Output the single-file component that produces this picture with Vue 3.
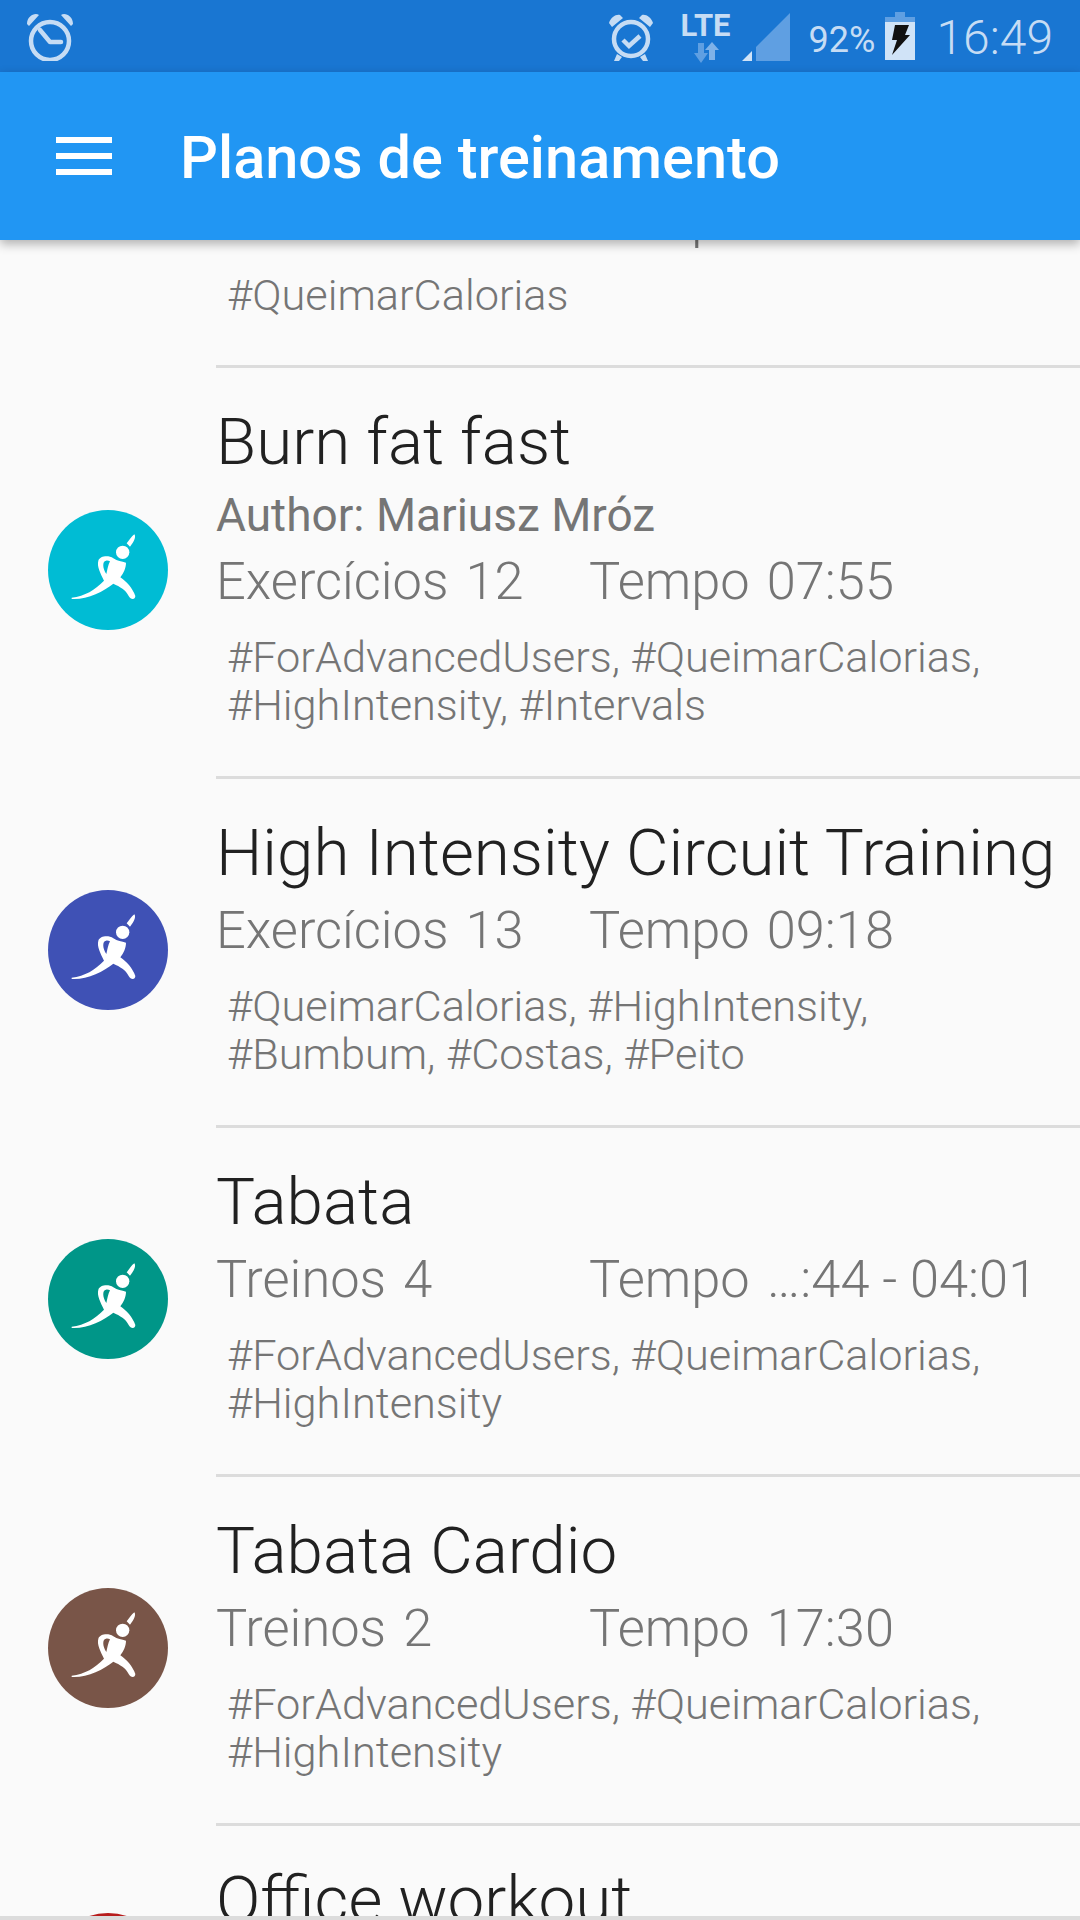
<template>
  <div class="screen">
    <div class="status-bar">
      <svg class="st-alarm-left" width="48" height="48" viewBox="0 0 48 48">
        <circle cx="24" cy="28" r="19" fill="none" stroke="#c6dcf4" stroke-width="4.5" />
        <path d="M14 17 L24 29 L35 29" fill="none" stroke="#c6dcf4" stroke-width="4.5" stroke-linecap="round" stroke-linejoin="round" />
        <path d="M1 11 C1 3 9 -1 13 2 L3 13 Z M47 11 C47 3 39 -1 35 2 L45 13 Z" fill="#c6dcf4" />
      </svg>
      <div class="status-right">
        <svg class="st-alarm" width="44" height="48" viewBox="0 0 44 48">
          <circle cx="22" cy="25" r="17" fill="none" stroke="#c6dcf4" stroke-width="4.5" />
          <path d="M14 26 L20 32 L31 22" fill="none" stroke="#c6dcf4" stroke-width="4.5" />
          <path d="M0 9 C2 3 7 0 11 1 L14 4 L3 13 Z M44 9 C42 3 37 0 33 1 L30 4 L41 13 Z" fill="#c6dcf4" />
          <path d="M8 40 L5 47 L10 47 L13 43 Z M36 40 L39 47 L34 47 L31 43 Z" fill="#c6dcf4" />
        </svg>
        <div class="st-network">
          <span class="st-lte">LTE</span>
          <svg width="28" height="21" viewBox="0 0 28 21">
            <path d="M6 1 H12 V11 H16 L9 21 L2 11 H6 Z" fill="#5f9fe2" />
            <path d="M17 18 H23 V8 H27 L20 0 L13 8 H17 Z" fill="#7fb2e8" />
          </svg>
        </div>
        <svg class="st-signal" width="48" height="48" viewBox="0 0 48 48">
          <path d="M14 48 V34 L48 0 V48 Z" fill="#5f9fe2" />
          <path d="M0 48 L10 38 V48 Z" fill="#d0e3f7" />
        </svg>
        <span class="st-percent">92%</span>
        <svg class="st-battery" width="30" height="48" viewBox="0 0 30 48">
          <path d="M10 0 H20 V5 H30 V10 H0 V5 H10 Z" fill="#5f9fe2" />
          <rect x="0" y="10" width="30" height="38" fill="#d0e3f7" />
          <path d="M10 13 H24 L20 23 H25 L7 43 L12 28 H7 Z" fill="#111" />
        </svg>
        <span class="st-time">16:49</span>
      </div>
    </div>

    <header class="app-bar">
      <div class="menu-icon">
        <span></span>
        <span></span>
        <span></span>
      </div>
      <h1>Planos de treinamento</h1>
    </header>

    <div class="list">
      <div class="cut-item">
        <div class="meta">
          <div class="meta-col"><span>Exercícios</span></div>
          <div class="meta-col"><span>Tempo</span></div>
        </div>
        <div class="tags">#QueimarCalorias</div>
      </div>

      <div v-for="plan in plans" :key="plan.title" class="item">
        <div class="avatar" :style="{ background: plan.color }">
          <svg width="120" height="120" viewBox="54 60 360 360">
            <circle cx="278" cy="187" r="20" fill="#fff" />
            <path d="M313 133 C319 140 312 156 300 170 L290 160 C298 150 305 138 313 133 Z" fill="#fff" />
            <path fill="#fff" fill-rule="evenodd" d="M125 323 C165 318 195 300 222 272 C212 250 200 230 205 212 C210 198 235 195 250 205 C262 213 275 215 288 218 C288 235 280 250 271 262 C290 275 308 295 316 318 C316 330 302 330 296 318 C288 300 270 290 250 281 C220 305 170 330 125 327 Z M228 212 C216 214 218 236 229 252 C232 240 234 225 240 214 C236 212 232 211 228 212 Z" />
          </svg>
        </div>
        <div class="body">
          <div class="title">{{ plan.title }}</div>
          <div v-if="plan.author" class="author">Author: {{ plan.author }}</div>
          <div class="meta">
            <div class="meta-col"><span>{{ plan.countLabel }}</span><span>{{ plan.count }}</span></div>
            <div class="meta-col"><span>Tempo</span><span>{{ plan.time }}</span></div>
          </div>
          <div class="tags">{{ plan.tags }}</div>
        </div>
      </div>
    </div>
    <div class="bottom-line"></div>
  </div>
</template>

<script setup>
const plans = [
  {
    title: 'Burn fat fast',
    author: 'Mariusz Mróz',
    countLabel: 'Exercícios',
    count: 12,
    time: '07:55',
    tags: '#ForAdvancedUsers, #QueimarCalorias, #HighIntensity, #Intervals',
    color: '#00BCD4'
  },
  {
    title: 'High Intensity Circuit Training',
    countLabel: 'Exercícios',
    count: 13,
    time: '09:18',
    tags: '#QueimarCalorias, #HighIntensity, #Bumbum, #Costas, #Peito',
    color: '#3F51B5'
  },
  {
    title: 'Tabata',
    countLabel: 'Treinos',
    count: 4,
    time: '…:44 - 04:01',
    tags: '#ForAdvancedUsers, #QueimarCalorias, #HighIntensity',
    color: '#009688'
  },
  {
    title: 'Tabata Cardio',
    countLabel: 'Treinos',
    count: 2,
    time: '17:30',
    tags: '#ForAdvancedUsers, #QueimarCalorias, #HighIntensity',
    color: '#795548'
  },
  {
    title: 'Office workout',
    countLabel: 'Exercícios',
    count: 8,
    time: '04:00',
    tags: '#Costas',
    color: '#B71C1C'
  }
]
</script>

<style>
html,
body {
  margin: 0;
  background: #fafafa;
}
</style>

<style scoped>
.screen {
  width: 1080px;
  height: 1920px;
  display: flex;
  flex-direction: column;
  overflow: hidden;
  background: #fafafa;
  font-family: Roboto, "Liberation Sans", sans-serif;
}

.status-bar {
  height: 72px;
  flex-shrink: 0;
  display: flex;
  justify-content: space-between;
  align-items: flex-start;
  background: #1976d2;
  color: #c6dcf4;
}

.st-alarm-left {
  margin: 13px 0 0 26px;
}

.status-right {
  display: flex;
  align-items: flex-start;
  margin-right: 27px;
}

.st-alarm {
  margin-top: 14px;
}

.st-network {
  width: 52px;
  margin: 14px 0 0 27px;
  display: flex;
  flex-direction: column;
  align-items: center;
}

.st-lte {
  font-size: 31px;
  font-weight: 700;
  line-height: 24px;
  height: 28px;
}

.st-signal {
  margin: 13px 0 0 10px;
}

.st-percent {
  margin: 18px 0 0 19px;
  font-size: 36px;
  line-height: 44px;
}

.st-battery {
  margin: 12px 0 0 10px;
}

.st-time {
  margin: 13px 0 0 21px;
  font-size: 48px;
  line-height: 50px;
  font-weight: 300;
}

.app-bar {
  height: 168px;
  flex-shrink: 0;
  display: flex;
  align-items: center;
  background: #2196f3;
  box-shadow: 0 4px 10px rgba(0, 0, 0, 0.3);
  position: relative;
  z-index: 2;
}

.menu-icon {
  width: 56px;
  margin-left: 56px;
  display: flex;
  flex-direction: column;
  gap: 10px;
}

.menu-icon span {
  height: 6px;
  background: #fff;
}

.app-bar h1 {
  margin: 4px 0 0 68px;
  font-size: 59.5px;
  font-weight: 500;
  color: #fff;
}

.list {
  flex: 1;
  min-height: 0;
  overflow: hidden;
}

.cut-item {
  height: 125px;
  margin-left: 216px;
  display: flex;
  flex-direction: column;
  justify-content: flex-end;
  overflow: hidden;
  box-sizing: content-box;
  border-bottom: 3px solid #dcdcdc;
}

.cut-item .meta {
  flex-shrink: 0;
}

.cut-item .tags {
  flex-shrink: 0;
  margin-bottom: 45px;
}

.item {
  display: flex;
  align-items: center;
}

.avatar {
  width: 120px;
  height: 120px;
  flex-shrink: 0;
  margin: 0 48px 8px;
  border-radius: 50%;
}

.avatar svg {
  display: block;
}

.body {
  flex: 1;
  min-width: 0;
  padding: 35px 0 46px;
  border-bottom: 3px solid #dcdcdc;
}

.title {
  font-size: 65.5px;
  font-weight: 300;
  line-height: 78px;
  padding-bottom: 3px;
  color: #212121;
  white-space: nowrap;
}

.author {
  font-size: 46px;
  font-weight: 400;
  line-height: 62px;
  color: #757575;
}

.meta {
  display: flex;
  font-size: 52.4px;
  font-weight: 300;
  line-height: 70px;
  color: #757575;
}

.meta-col {
  display: flex;
  gap: 17px;
  white-space: nowrap;
}

.meta-col:first-child {
  width: 373px;
}

.tags {
  margin: 18px 70px 0 11px;
  font-size: 43.3px;
  font-weight: 300;
  line-height: 48px;
  color: #757575;
}

.bottom-line {
  height: 4px;
  flex-shrink: 0;
  background: #dcdcdc;
}
</style>
